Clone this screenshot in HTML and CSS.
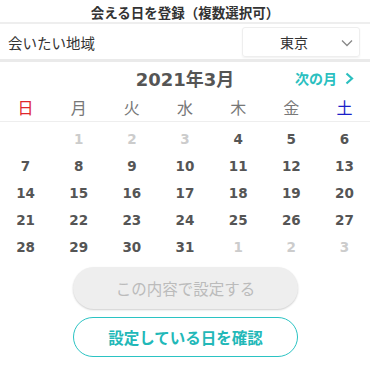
FILE: index.html
```html
<!DOCTYPE html>
<html lang="ja">
<head>
<meta charset="utf-8">
<link rel="stylesheet" href="styles.css">
</head>
<body>
<div class="page">
  <header class="title">会える日を登録（複数選択可）</header>
  <div class="region">
    <span class="region-label">会いたい地域</span>
    <div class="select">
      <span class="select-value">東京</span>
      <svg class="chev" width="12" height="8" viewBox="0 0 12 8"><path d="M1 1.5 L6 6.5 L11 1.5" fill="none" stroke="#888" stroke-width="1.3"/></svg>
    </div>
  </div>
  <div class="month">
    <span class="month-title">2021年3月</span>
    <a class="next">次の月<svg width="10" height="13" viewBox="0 0 10 13"><path d="M2.5 1.5 L8 6.5 L2.5 11.5" fill="none" stroke="#2bbfbf" stroke-width="2.2"/></svg></a>
  </div>
  <div class="weekdays">
    <span class="sun">日</span><span>月</span><span>火</span><span>水</span><span>木</span><span>金</span><span class="sat">土</span>
  </div>
  <div class="days">
    <span></span><span class="off">1</span><span class="off">2</span><span class="off">3</span><span>4</span><span>5</span><span>6</span>
    <span>7</span><span>8</span><span>9</span><span>10</span><span>11</span><span>12</span><span>13</span>
    <span>14</span><span>15</span><span>16</span><span>17</span><span>18</span><span>19</span><span>20</span>
    <span>21</span><span>22</span><span>23</span><span>24</span><span>25</span><span>26</span><span>27</span>
    <span>28</span><span>29</span><span>30</span><span>31</span><span class="off">1</span><span class="off">2</span><span class="off">3</span>
  </div>
  <div class="actions">
    <button class="btn btn-disabled">この内容で設定する</button>
    <button class="btn btn-outline">設定している日を確認</button>
  </div>
</div>
</body>
</html>
```
FILE: styles.css
```css
* { box-sizing: border-box; }
html, body { margin: 0; padding: 0; background: #fff; }
body { font-family: "Noto Sans CJK JP", sans-serif; color: #333; width: 370px; }
.title {
  height: 24px;
  line-height: 24px;
  text-align: center;
  font-size: 13.5px;
  font-weight: bold;
  color: #333;
  border-bottom: 2px solid #eee;
}
.region {
  height: 38px;
  display: flex;
  align-items: center;
  justify-content: space-between;
  padding: 0 10px 0 8px;
  border-bottom: 3px solid #eaeaea;
}
.region-label { font-size: 14.5px; color: #333; margin-top: 2px; }
.select {
  width: 118px;
  height: 30px;
  border: 1px solid #eee;
  border-radius: 3px;
  box-shadow: 0 1px 2px rgba(0,0,0,0.06);
  display: flex;
  align-items: center;
  justify-content: center;
  position: relative;
}
.select-value { font-size: 14px; color: #333; margin-right: 14px; }
.chev { position: absolute; right: 6px; top: 11px; }
.month {
  height: 28px;
  display: flex;
  align-items: center;
  justify-content: center;
  position: relative;
}
.month-title {
  font-family: "DejaVu Sans", "Noto Sans CJK JP", sans-serif;
  font-size: 18px;
  font-weight: bold;
  color: #555;
  margin-top: 4px;
}
.next {
  position: absolute;
  right: 16px;
  top: 6px;
  font-size: 14px;
  font-weight: bold;
  color: #2bbfbf;
  display: flex;
  align-items: center;
  gap: 7px;
}
.weekdays {
  display: grid;
  grid-template-columns: repeat(7, 1fr);
  height: 32px;
  align-items: center;
  border-bottom: 1px solid #eee;
  text-align: center;
  font-size: 16px;
  color: #777;
  margin: 0 -1px;
  padding-top: 2px;
}
.weekdays .sun { color: #e0262c; }
.weekdays .sat { color: #1a20c8; }
.days {
  display: grid;
  grid-template-columns: repeat(7, 1fr);
  grid-auto-rows: 27.2px;
  align-items: center;
  text-align: center;
  font-family: "DejaVu Sans", sans-serif;
  font-weight: bold;
  font-size: 13.5px;
  color: #555;
  padding-top: 3px;
  margin: 0 -1px;
}
.days .off { color: #ccc; }
.actions {
  display: flex;
  flex-direction: column;
  align-items: center;
  gap: 8px;
  padding-top: 6px;
  padding-left: 1px;
}
.btn {
  width: 225px;
  height: 42px;
  border-radius: 21px;
  font-family: "Noto Sans CJK JP", sans-serif;
  font-size: 15.5px;
}
.btn-disabled {
  background: #eee;
  border: none;
  color: #bbb;
  box-shadow: 0 1px 2px rgba(0,0,0,0.2);
}
.btn-outline {
  background: #fff;
  border: 1.5px solid #2bc3c3;
  color: #22b8b8;
  font-weight: bold;
  height: 40px;
}
```
